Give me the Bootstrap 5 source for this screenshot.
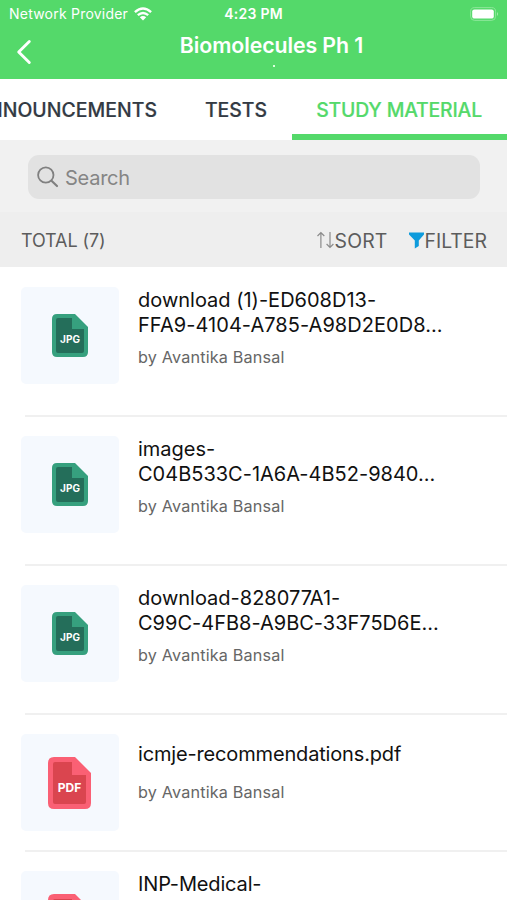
<!DOCTYPE html>
<html lang="en">
<head>
<meta charset="utf-8">
<meta name="viewport" content="width=device-width, initial-scale=1">
<title>Biomolecules Ph 1</title>
<link href="https://cdn.jsdelivr.net/npm/bootstrap@5.3.0/dist/css/bootstrap.min.css" rel="stylesheet">
<style>
body{font-family:Inter,"Liberation Sans",sans-serif;height:900px;overflow:hidden;color:#111;font-feature-settings:"calt" 0}
span,h1{white-space:nowrap}
svg{display:block;flex:none}
.app-header{height:79px;background:#54d96a;color:#fff}
.status{height:27px;font-size:14px;line-height:27px;padding:0 8px 0 9px}
.carrier{width:121px;letter-spacing:.22px}
.clock{font-weight:600;letter-spacing:.25px}
.title-row{height:52px;padding-left:16px}
.page-title{font-size:21.3px;line-height:26px;font-weight:600;letter-spacing:-.08px;margin:5px 0 0}
.title-dot{width:2px;height:2px;background:#d9ffdc;margin-top:7px}
.tabs{height:61px}
.tab-item{font-size:19.4px;font-weight:500;line-height:61px;padding-top:1px;color:#333a43;-webkit-text-stroke:.2px currentColor}
.tab-announce{width:157px;letter-spacing:.05px}
.tab-tests{width:135px;padding-right:25px}
.tab-study{width:215px;padding-right:25px;color:#54d96a;border-bottom:6px solid #54d96a;letter-spacing:-.17px}
.search-area{height:72px;background:#f1f1f1;padding:15px 27px 0 28px}
.search-box{height:44px;border-radius:11px;background:#e2e2e2;color:#858585;font-size:20px;padding-left:9px}
.search-label{padding-left:6px;padding-top:1px;letter-spacing:-.25px}
.tools{height:55px;background:#eee;color:#5c5c5c;padding:5px 20px 0 21px;font-size:19.4px}
.total{font-size:18px;padding-bottom:3px;letter-spacing:-.1px}
.sort{letter-spacing:.2px}
.funnel{margin-left:21px}
.file-row{height:149px;padding:20px 0 0 21px}
.file-row.short{height:137px}
.file-row.short.last{height:49px;overflow:hidden}
.file-row+.file-row::before{content:"";position:absolute;left:25px;right:0;top:-1px;height:2px;background:#f0f0f0}
.rule-soft{height:2px;margin:-1px 0 -1px 25px;background:#f0f0f0}
.thumb{width:98px;height:97px;border-radius:5px;background:#f5f9fe}
.thumb.pdf-thumb{padding-right:1px}
.thumb text{font-family:Inter,"Liberation Sans",sans-serif;font-weight:700;fill:#fff;text-anchor:middle}
.file-text{padding-left:19px;padding-top:1px}
.file-name{font-size:20px;line-height:24.5px;color:#111}
.file-by{font-size:16.2px;line-height:20px;color:#666;margin-top:10px;letter-spacing:.17px}
.n2{letter-spacing:.05px}
.n7{letter-spacing:-.16px}
.n8{letter-spacing:-.15px}
.short .file-text{padding-top:8px}
.short .file-by{margin-top:15px}
.short.last .file-text{padding-top:1px}
</style>
<script src="https://cdn.jsdelivr.net/npm/bootstrap@5.3.0/dist/js/bootstrap.bundle.min.js"></script>
</head>
<body>
<svg width="0" height="0" class="position-absolute">
  <symbol id="jpg" viewBox="0 0 36 43"><path d="M5 0H23L36 13V38Q36 43 31 43H5Q0 43 0 38V5Q0 0 5 0Z" fill="#36a07e"/><path d="M6 4H20V15H32V37Q32 39 30 39H6Q4 39 4 37V6Q4 4 6 4Z" fill="#246e5a"/></symbol>
  <symbol id="pdf" viewBox="0 0 43 52"><path d="M6 0H27L43 16V46Q43 52 37 52H6Q0 52 0 46V6Q0 0 6 0Z" fill="#fa6074"/><path d="M7 5H24V18H38V45Q38 47 36 47H7Q5 47 5 45V7Q5 5 7 5Z" fill="#da454f"/></symbol>
</svg>
<header class="app-header">
  <div class="status d-flex align-items-center position-relative">
    <span class="carrier">Network Provider</span>
    <svg class="ms-1" width="18" height="14" viewBox="0 0 18 14" fill="none" stroke="#fff" stroke-width="2.4"><path d="M.9 5.1Q9-2.1 17.1 5.1M3.8 8.2Q9 3.700 14.2 8.2"/><path d="M5.8 10.2Q9 7.6 12.2 10.2L9 13.5Z" fill="#fff" stroke="none"/></svg>
    <span class="clock position-absolute start-50 translate-middle-x">4:23 PM</span>
    <svg class="ms-auto" width="29" height="14" viewBox="0 0 29 14"><rect x=".6" y=".6" width="25" height="12.8" rx="4" fill="none" stroke="#a4ecae" stroke-opacity=".7"/><rect x="2.2" y="2.4" width="21.6" height="9.2" rx="2.2" fill="#fff"/><path d="M27 5Q29 7 27 9Z" fill="#a4ecae"/></svg>
  </div>
  <div class="title-row d-flex">
    <svg class="mt-2 pt-1" width="16" height="38" viewBox="0 0 16 34" fill="none" stroke="#fff" stroke-width="2.9" stroke-linecap="round" stroke-linejoin="round"><path d="M13.300 2.500L2.700 13L13.300 23.500"/></svg>
    <div class="d-flex flex-column align-items-center flex-grow-1 ms-2"><h1 class="page-title pe-1">Biomolecules Ph 1</h1><div class="title-dot"></div></div>
  </div>
</header>
<nav class="tabs d-flex overflow-hidden">
  <span class="tab-item tab-announce d-flex justify-content-end flex-shrink-0">ANNOUNCEMENTS</span>
  <span class="tab-item tab-tests d-flex justify-content-end flex-shrink-0">TESTS</span>
  <span class="tab-item tab-study d-flex justify-content-end flex-shrink-0">STUDY MATERIAL</span>
</nav>
<div class="search-area">
  <div class="search-box d-flex align-items-center">
    <svg width="22" height="22" viewBox="0 0 22 22" fill="none" stroke="#808080" stroke-width="1.8" stroke-linecap="round"><circle cx="8.8" cy="9" r="7.7"/><path d="M14.5 14.7L20 20" stroke-width="2.2"/></svg>
    <span class="search-label">Search</span>
  </div>
</div>
<div class="tools d-flex align-items-center">
  <span class="total me-auto">TOTAL (7)</span>
  <svg class="mb-1" width="18" height="18" viewBox="0 0 18 18" fill="none" stroke="#8b8b8b" stroke-width="1.2"><path d="M3.900 17V1.500M.5 5L3.900 1.500L7.300 5M13 1V16.500M9.600 13L13 16.500L16.400 13"/></svg>
  <span class="sort">SORT</span>
  <svg class="funnel mb-1" width="16" height="17" viewBox="0 0 16 17" fill="#0d9bdc"><path d="M0 .5H15V2.500L9.800 8.500V14L5.800 16.500V8.500L0 2.500Z"/></svg>
  <span class="filter">FILTER</span>
</div>
<main>
  <article class="file-row d-flex position-relative">
    <div class="thumb d-flex align-items-center justify-content-center flex-shrink-0"><svg width="36" height="43"><use href="#jpg"/><text x="18" y="28.500" font-size="10">JPG</text></svg></div>
    <div class="file-text"><div class="file-name"><span class="n1">download (1)-ED608D13-</span><br><span class="n2">FFA9-4104-A785-A98D2E0D8...</span></div><div class="file-by">by Avantika Bansal</div></div>
  </article>
  <article class="file-row d-flex position-relative">
    <div class="thumb d-flex align-items-center justify-content-center flex-shrink-0"><svg width="36" height="43"><use href="#jpg"/><text x="18" y="28.500" font-size="10">JPG</text></svg></div>
    <div class="file-text"><div class="file-name"><span class="n3">images-</span><br><span class="n4">C04B533C-1A6A-4B52-9840...</span></div><div class="file-by">by Avantika Bansal</div></div>
  </article>
  <article class="file-row d-flex position-relative">
    <div class="thumb d-flex align-items-center justify-content-center flex-shrink-0"><svg width="36" height="43"><use href="#jpg"/><text x="18" y="28.500" font-size="10">JPG</text></svg></div>
    <div class="file-text"><div class="file-name"><span class="n5">download-828077A1-</span><br><span class="n6">C99C-4FB8-A9BC-33F75D6E...</span></div><div class="file-by">by Avantika Bansal</div></div>
  </article>
  <article class="file-row short d-flex position-relative">
    <div class="thumb pdf-thumb d-flex align-items-center justify-content-center flex-shrink-0"><svg width="43" height="52"><use href="#pdf"/><text x="21.500" y="35" font-size="12">PDF</text></svg></div>
    <div class="file-text"><div class="file-name"><span class="n7">icmje-recommendations.pdf</span></div><div class="file-by">by Avantika Bansal</div></div>
  </article>
  <div class="rule-soft"></div>
  <article class="file-row short last d-flex">
    <div class="thumb pdf-thumb d-flex align-items-center justify-content-center flex-shrink-0"><svg width="43" height="52"><use href="#pdf"/></svg></div>
    <div class="file-text"><div class="file-name"><span class="n8">INP-Medical-</span></div></div>
  </article>
</main>
</body>
</html>
